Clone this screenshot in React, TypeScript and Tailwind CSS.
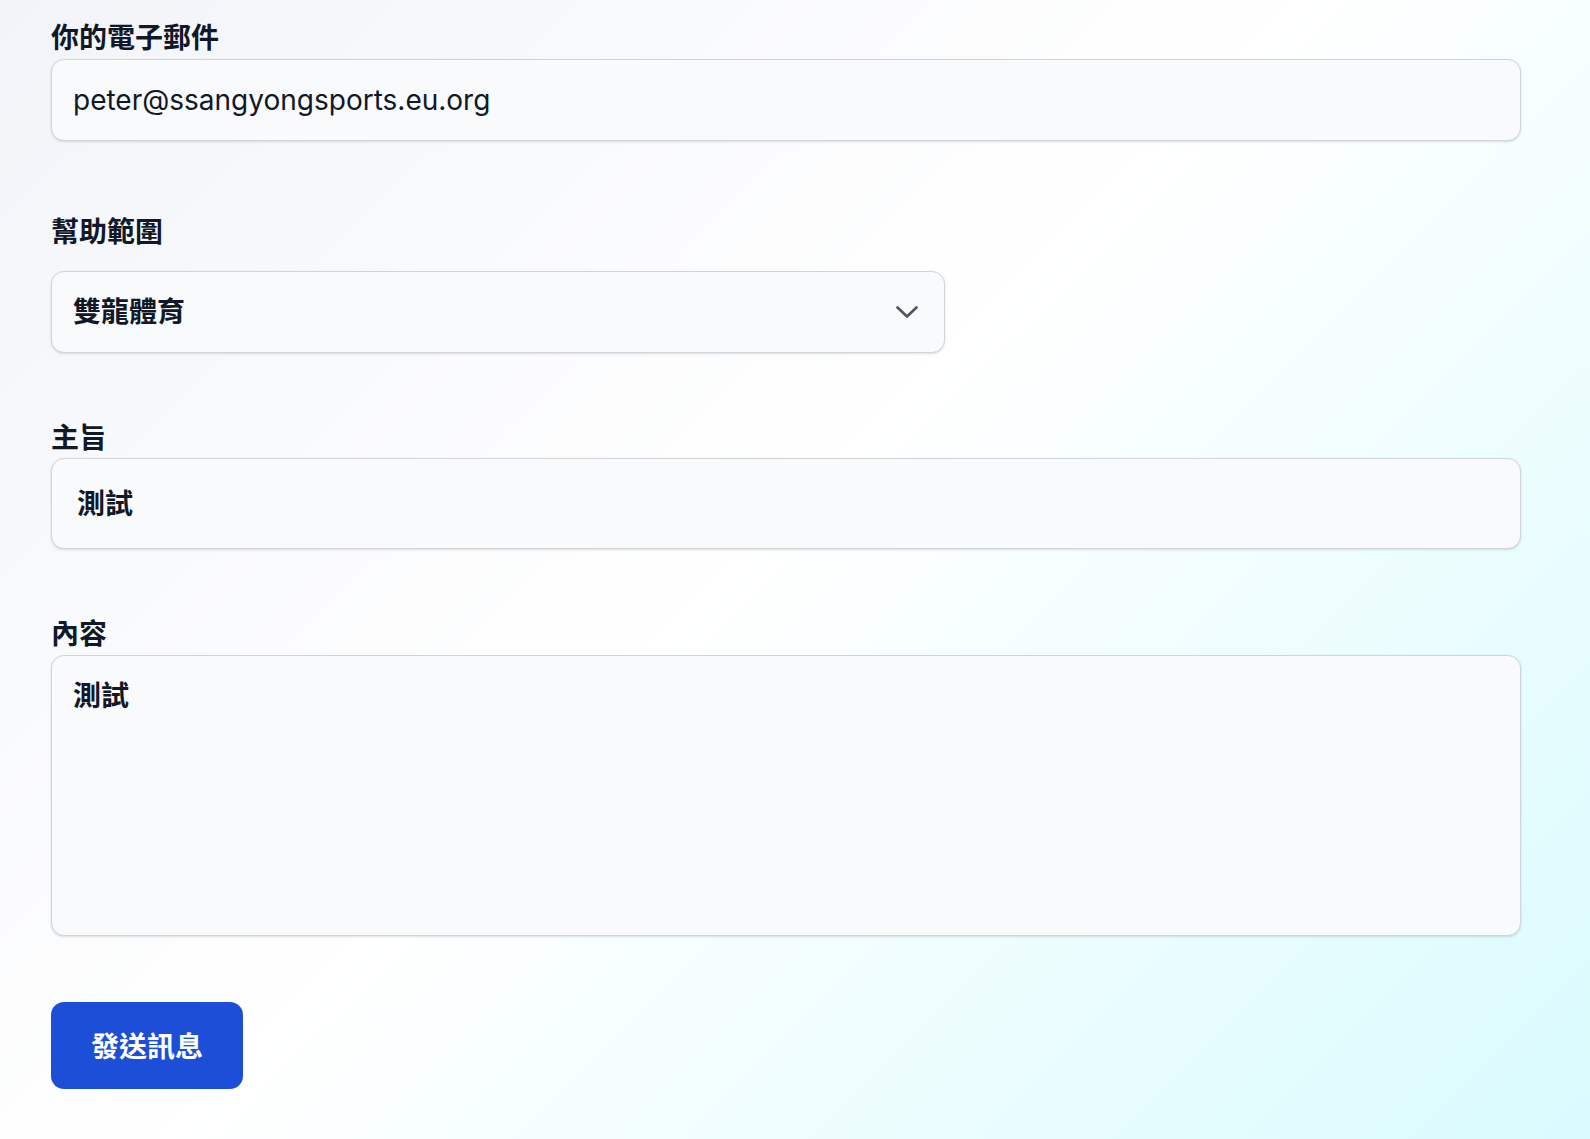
import React from 'react'

const FONT = "font-['Inter','Noto_Sans_CJK_TC',sans-serif]"

function Label({ children, className = '' }: { children: React.ReactNode; className?: string }) {
  return (
    <label className={`block text-[28px] font-semibold leading-[40px] text-[#111827] ${className}`}>
      {children}
    </label>
  )
}

export default function App() {
  return (
    <div
      className={`${FONT} min-h-screen w-full bg-[linear-gradient(135deg,#f2f4f9_0%,#ffffff_48%,#d9fbfe_100%)] pl-[51px] pr-[69px] pt-[18px] pb-[50px]`}
    >
      <form className="flex flex-col" onSubmit={(e) => e.preventDefault()}>
        {/* Email */}
        <Label>你的電子郵件</Label>
        <div className="mt-[1px] flex h-[82px] items-center rounded-[13px] border-[1.5px] border-[#d1d4d9] bg-[#f9fafb] px-[21px] shadow-sm">
          <span className="text-[28px] text-[#111827]">peter@ssangyongsports.eu.org</span>
        </div>

        {/* Help scope */}
        <Label className="mt-[71px]">幫助範圍</Label>
        <div className="mt-[19px] flex h-[82px] w-[894px] items-center justify-between rounded-[13px] border-[1.5px] border-[#d1d4d9] bg-[#f9fafb] pl-[21px] pr-[26px] shadow-sm">
          <span className="text-[28px] font-semibold text-[#111827]">雙龍體育</span>
          <svg width="22" height="12" viewBox="0 0 22 12" fill="none">
            <path d="M1.5 1.5 11 10.5 20.5 1.5" stroke="#4b5563" strokeWidth="2.6" strokeLinecap="round" strokeLinejoin="round" />
          </svg>
        </div>

        {/* Subject */}
        <Label className="mt-[65px]">主旨</Label>
        <div className="flex h-[91px] items-center rounded-[13px] border-[1.5px] border-[#d1d4d9] bg-[#f9fafb] px-[25px] shadow-sm">
          <span className="text-[28px] font-semibold text-[#111827]">測試</span>
        </div>

        {/* Content */}
        <Label className="mt-[65px]">內容</Label>
        <div className="mt-[1px] h-[281px] rounded-[13px] border-[1.5px] border-[#d1d4d9] bg-[#f9fafb] px-[21px] pt-[20px] shadow-sm">
          <span className="block text-[28px] font-semibold leading-[40px] text-[#111827]">測試</span>
        </div>

        <div className="mt-[66px]">
          <button
            type="submit"
            className="h-[87px] w-[192px] rounded-[13px] bg-[#1d4ed8] pt-[3px] text-[28px] font-semibold text-white"
          >
            發送訊息
          </button>
        </div>
      </form>
    </div>
  )
}
